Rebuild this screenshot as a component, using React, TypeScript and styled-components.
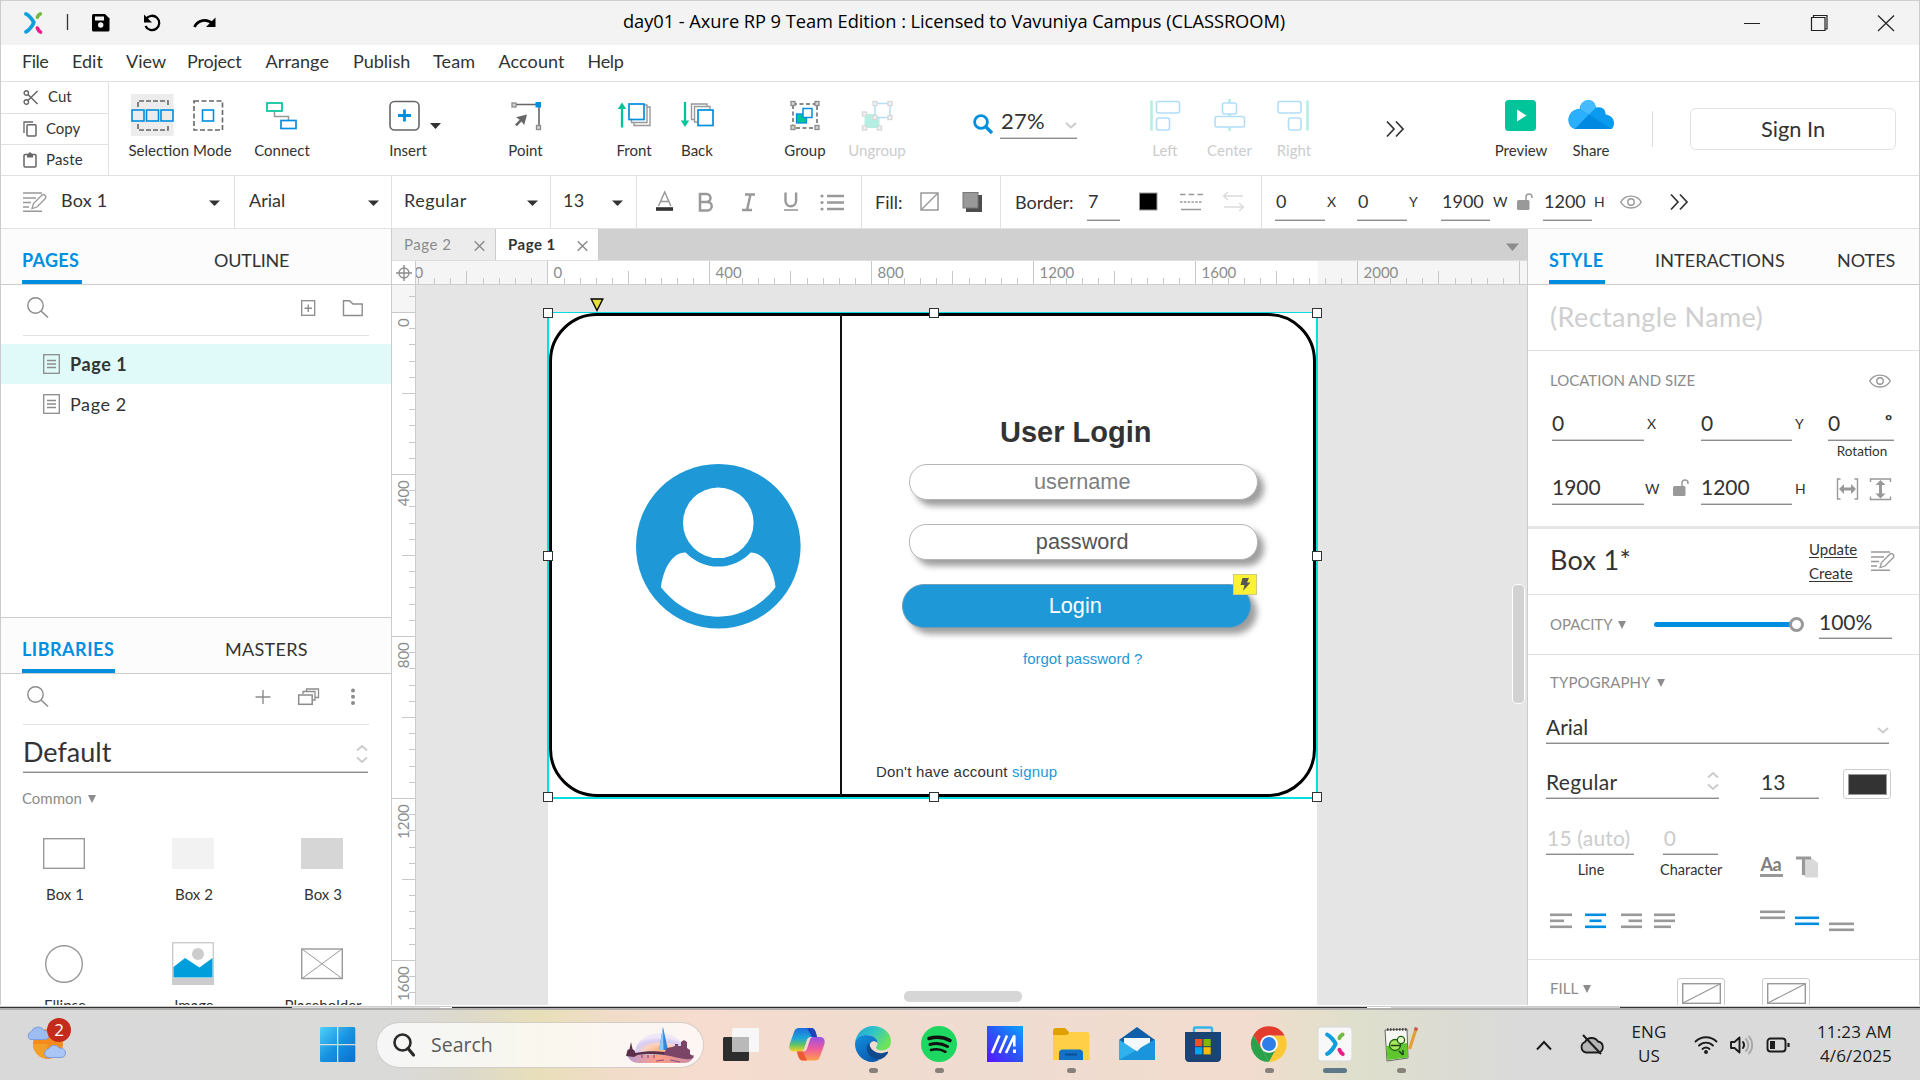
import React from 'react';
import styled, { createGlobalStyle } from 'styled-components';

const ui = 'Lato, "Noto Sans", sans-serif';
const sys = '"Open Sans", "Noto Sans", sans-serif';
const arial = '"Liberation Sans", Arial, sans-serif';
const INK = '#333333';
const GRAY = '#8c8c8c';
const ICON = '#999999';
const BLUE = '#008fe0';
const GREEN = '#00c49a';
const LINE = '#e2e2e2';

const GlobalStyle = createGlobalStyle`
  * { box-sizing: border-box; }
  body { margin: 0; width: 1920px; height: 1080px; overflow: hidden; background: #fff; font-family: ${ui}; color: ${INK}; }
  svg { display: block; flex: none; overflow: visible; }
`;

/* ---------- shared parts ---------- */

interface TxtProps { $s?: number; $w?: number; $ml?: number; $c?: string; $b?: boolean; $ls?: number; $align?: string; $mt?: number }
const Txt = styled.span<TxtProps>`
  display: block;
  flex: none;
  padding-bottom: 2px;
  white-space: nowrap;
  line-height: 1.2;
  font-size: ${p => p.$s ?? 18}px;
  width: ${p => (p.$w ? `${p.$w}px` : 'auto')};
  margin-left: ${p => p.$ml ?? 0}px;
  margin-top: ${p => p.$mt ?? 0}px;
  color: ${p => p.$c ?? INK};
  font-weight: ${p => (p.$b ? 700 : 400)};
  letter-spacing: ${p => p.$ls ?? 0}px;
  text-align: ${p => p.$align ?? 'left'};
`;

const Spacer = styled.div<{ $w: number }>`flex: none; width: ${p => p.$w}px;`;

const Line = styled.div<{ $h?: number; $mt?: number; $pl?: number; $align?: string }>`
  display: flex;
  align-items: ${p => p.$align ?? 'center'};
  height: ${p => (p.$h ? `${p.$h}px` : 'auto')};
  margin-top: ${p => p.$mt ?? 0}px;
  padding-left: ${p => p.$pl ?? 0}px;
`;

const Field = styled.div<{ $w: number; $h?: number; $s?: number; $c?: string; $pl?: number; $mb?: number; $ls?: number }>`
  flex: none;
  display: flex;
  align-items: center;
  justify-content: space-between;
  width: ${p => p.$w}px;
  height: ${p => p.$h ?? 36}px;
  padding-left: ${p => p.$pl ?? 1}px;
  margin-bottom: ${p => p.$mb ?? 0}px;
  border-bottom: 1px solid ${GRAY};
  box-shadow: 0 -1px 0 #cfcfcf inset;
  font-size: ${p => p.$s ?? 21}px;
  letter-spacing: ${p => p.$ls ?? 0}px;
  line-height: 1;
  color: ${p => p.$c ?? INK};
  white-space: nowrap;
`;

interface IcoProps { x?: number; y?: number; w: number; h: number; ml?: number; children: React.ReactNode }
const IcoSvg = styled.svg<{ $ml: number }>`margin-left: ${p => p.$ml}px;`;
const Ico = ({ x = 0, y = 0, w, h, ml = 0, children }: IcoProps) => (
  <IcoSvg $ml={ml} width={w} height={h} viewBox={`${x} ${y} ${w} ${h}`} fill="none">{children}</IcoSvg>
);

const Caret = ({ ml = 0 }: { ml?: number }) => (
  <Ico ml={ml} w={11} h={6}><path d="M0 1.500h11L5.500 7z" fill={INK} /></Ico>
);
const Triangle = ({ ml = 0 }: { ml?: number }) => (
  <Ico ml={ml} w={8} h={8}><path d="M0 0h8L4 8z" fill={GRAY} /></Ico>
);
const UpDown = () => (
  <Ico w={12} h={20}><path d="M1 6.500 6 2l5 4.500M1 13.500 6 18l5-4.500" stroke="#cccccc" strokeWidth="2" /></Ico>
);
const Down = () => (
  <Ico w={12} h={16}><path d="M1 10l5 4.500L11 10" stroke="#cccccc" strokeWidth="2" /></Ico>
);
const More = ({ ml = 0 }: { ml?: number }) => (
  <Ico ml={ml} w={18} h={16}><path d="M1 .5 8 8l-7 7.500M10 .5 17 8l-7 7.500" stroke={INK} strokeWidth="1.700" /></Ico>
);
const StylePen = ({ ml = 0 }: { ml?: number }) => (
  <Ico ml={ml} w={24} h={20}>
    <path d="M0 1h19M0 6h13M0 10.500h8M0 15h6M0 19.200h19" stroke={ICON} strokeWidth="1.500" />
    <path d="M9 16.500l1.500-5L18.500 3.500a2.300 2.300 0 0 1 3.600 3.200L14 15z" stroke={ICON} strokeWidth="1.300" fill="#fff" />
  </Ico>
);
const Eye = ({ ml = 0 }: { ml?: number }) => (
  <Ico ml={ml} w={22} h={14}>
    <path d="M.7 7C5-.9 17-.9 21.300 7 17 14.900 5 14.900.7 7z" stroke={ICON} strokeWidth="1.400" />
    <circle cx="11" cy="7" r="3.200" stroke={ICON} strokeWidth="1.400" />
  </Ico>
);
const Lock = ({ ml = 0 }: { ml?: number }) => (
  <Ico ml={ml} w={16} h={17}>
    <rect x="0" y="7" width="12.500" height="10" rx="1.500" fill={ICON} />
    <path d="M9 7V4a3 3 0 0 1 6 0v1" stroke={ICON} strokeWidth="1.500" />
  </Ico>
);
const Glass = ({ ml = 0 }: { ml?: number }) => (
  <Ico ml={ml} w={22} h={21}>
    <circle cx="8.500" cy="8.500" r="7.700" stroke={GRAY} strokeWidth="1.400" />
    <path d="M14 14l7 6.500" stroke={GRAY} strokeWidth="1.600" />
  </Ico>
);

/* ---------- window chrome ---------- */

const Window = styled.div`
  width: 1920px;
  height: 1080px;
  display: flex;
  flex-direction: column;
`;
const Frame = styled.div`
  flex: none;
  height: 1005px;
  display: flex;
  flex-direction: column;
  border-left: 1px solid #cccccc;
  border-right: 1px solid #cccccc;
  background: #fff;
`;
const TitleBar = styled.header`
  flex: none;
  display: flex;
  align-items: center;
  height: 45px;
  padding-left: 23px;
  border-top: 1px solid #cfcfcf;
  background: #f3f3f3;
`;
const Title = styled.div`
  flex: none;
  width: 668px;
  margin-left: 406px;
  margin-bottom: 5px;
  font: 18.300px ${sys};
  letter-spacing: -0.060px;
  line-height: 24px;
  color: #000;
  white-space: nowrap;
`;
const MenuBar = styled.nav`
  flex: none;
  display: flex;
  align-items: center;
  height: 37px;
  padding-left: 21px;
  border-bottom: 1px solid ${LINE};
`;

const menus: [string, number, number?][] = [
  ['File', 50, -0.5], ['Edit', 54], ['View', 61], ['Project', 78.5, -0.2], ['Arrange', 87.5, 0.1],
  ['Publish', 80, 0], ['Team', 65.5, 0.1], ['Account', 89, 0.1], ['Help', 40, -0.3],
];

/* ---------- main toolbar ---------- */

const ToolBar = styled.div`
  flex: none;
  display: flex;
  height: 94px;
  border-bottom: 1px solid ${LINE};
`;
const Clipboard = styled.div`
  flex: none;
  width: 108px;
  border-right: 1px solid ${LINE};
  display: flex;
  flex-direction: column;
`;
const ClipRow = styled.div<{ $h: number }>`
  display: flex;
  align-items: center;
  height: ${p => p.$h}px;
  padding-left: 22px;
  padding-bottom: 1px;
  & + & { border-top: 1px solid ${LINE}; }
`;
const ToolCell = styled.div<{ $w: number; $gap: number }>`
  flex: none;
  width: ${p => p.$w}px;
  margin-left: ${p => p.$gap}px;
  padding-top: 12px;
  display: flex;
  flex-direction: column;
  align-items: center;
`;
const ToolLabel = styled.span<{ $off?: boolean }>`
  margin-top: 5px;
  font-size: 15px;
  line-height: 18px;
  white-space: nowrap;
  color: ${p => (p.$off ? '#cccccc' : INK)};
`;
const ZoomBox = styled.div`
  flex: none;
  display: flex;
  align-items: center;
  width: 104px;
  height: 36px;
  margin: 21px 0 0 64px;
`;
const GlassHolder = styled.div`padding-top: 6px;`;
const MoreHolder = styled.div`flex: none; margin: 39px 0 0 62px;`;
const SignIn = styled.button`
  flex: none;
  width: 206px;
  height: 42px;
  margin: 26px 0 0 37px;
  padding: 0 0 1px;
  border: 1.500px solid ${LINE};
  border-radius: 6px;
  background: #fff;
  font: 21.800px ${ui};
  color: ${INK};
`;
const ToolDivider = styled.div`
  flex: none;
  width: 1px;
  height: 36px;
  margin: 29px 0 0 31px;
  background: #dedede;
`;

interface ToolProps { x: number; w: number; gap: number; label: string; off?: boolean; children: React.ReactNode }
const Tool = ({ x, w, gap, label, off, children }: ToolProps) => (
  <ToolCell $w={w} $gap={gap}>
    <Ico x={x} y={94} w={w} h={42}>{children}</Ico>
    <ToolLabel $off={off}>{label}</ToolLabel>
  </ToolCell>
);

const Node = ({ x, y, c = GRAY, f = '#d5d5d5' }: { x: number; y: number; c?: string; f?: string }) => (
  <rect x={x - 2} y={y - 2} width="4" height="4" fill={f} stroke={c} strokeWidth="1.300" />
);

const MainToolbar = () => (
  <ToolBar>
    <Clipboard>
      <ClipRow $h={31}>
        <Ico w={16} h={15}>
          <circle cx="3.300" cy="3" r="2.200" stroke="#666" strokeWidth="1.400" />
          <circle cx="3.300" cy="12" r="2.200" stroke="#666" strokeWidth="1.400" />
          <path d="M5 4.500l9.500 9.500M5 10.500L14.500 1" stroke="#666" strokeWidth="1.500" />
        </Ico>
        <Txt $s={15} $ml={9}>Cut</Txt>
      </ClipRow>
      <ClipRow $h={31}>
        <Ico w={14} h={16}>
          <path d="M1 12V1h9" stroke="#666" strokeWidth="1.300" />
          <rect x="4" y="3.700" width="9" height="11.300" rx="1" stroke="#666" strokeWidth="1.500" />
        </Ico>
        <Txt $s={15} $ml={9}>Copy</Txt>
      </ClipRow>
      <ClipRow $h={31}>
        <Ico w={14} h={16}>
          <rect x="1" y="2.500" width="12" height="12.500" rx="1" stroke="#666" strokeWidth="1.500" />
          <path d="M4 2h6v3.500H4z" fill="#666" />
          <circle cx="7" cy="1.800" r="1.600" fill="#666" />
        </Ico>
        <Txt $s={15} $ml={9} $ls={0.2}>Paste</Txt>
      </ClipRow>
    </Clipboard>

    <Tool x={128} w={104} gap={19} label="Selection Mode">
      <rect x="131" y="94" width="42.500" height="42" fill="#ececec" />
      <path d="M138 107v-6h30v6M138 124v6h30v-6" stroke="#666" strokeWidth="1.600" strokeDasharray="5 2" />
      {[132, 146.500, 161].map(x => <rect key={x} x={x} y="110" width="12" height="11" fill="#ececec" stroke={BLUE} strokeWidth="1.600" />)}
      <rect x="194" y="101" width="28.500" height="29" stroke="#666" strokeWidth="1.600" strokeDasharray="5 2.500" />
      <rect x="202.500" y="110" width="11" height="11" stroke={BLUE} strokeWidth="1.600" />
    </Tool>
    <Tool x={252} w={60} gap={20} label="Connect">
      <path d="M274.500 111v5.500h14v3.500" stroke={ICON} strokeWidth="1.500" />
      <rect x="267" y="103" width="15" height="8" stroke={GREEN} strokeWidth="1.700" />
      <rect x="281" y="120.500" width="15" height="8" stroke={BLUE} strokeWidth="1.700" />
    </Tool>
    <Tool x={375} w={66} gap={63} label="Insert">
      <rect x="390" y="101.500" width="29" height="28.500" rx="4.500" stroke="#666" strokeWidth="1.600" />
      <path d="M404.500 109.500v12M398 115.500h13" stroke={BLUE} strokeWidth="2.800" />
      <path d="M430 123h11l-5.500 6z" fill={INK} />
    </Tool>
    <Tool x={495} w={61} gap={54} label="Point">
      <path d="M514 104.500h25v22" stroke="#666" strokeWidth="1.600" />
      <Node x={514} y={105} />
      <Node x={538.500} y={127.500} />
      <rect x="535.500" y="102" width="5.500" height="5.500" fill={BLUE} />
      <path d="M527 114.500l-2.800 10.500-2.700-3.400-4.700 4.600-1.800-1.800 4.700-4.600-3.600-2.500z" fill="#666" />
    </Tool>
    <Tool x={604} w={60} gap={48} label="Front">
      <path d="M622 107v20.500" stroke={GREEN} strokeWidth="2.300" />
      <path d="M617.800 109l4.200-6.500 4.200 6.500z" fill={GREEN} />
      <path d="M646.500 107h3.500v18.500h-16v-3" stroke={ICON} strokeWidth="1.400" />
      <path d="M644 105h3v17.500h-15.500V119" stroke={ICON} strokeWidth="1.400" />
      <rect x="629" y="104" width="15" height="15.500" stroke={BLUE} strokeWidth="1.700" fill="#fff" />
    </Tool>
    <Tool x={667} w={60} gap={3} label="Back">
      <path d="M685 102v20" stroke={GREEN} strokeWidth="2.300" />
      <path d="M680.800 120.500l4.200 6.500 4.200-6.500z" fill={GREEN} />
      <path d="M695 119.500h-3.500V104H707v3" stroke={ICON} strokeWidth="1.400" />
      <path d="M697.500 122h-3v-15.500H710v3" stroke={ICON} strokeWidth="1.400" />
      <rect x="698" y="110" width="15" height="15.500" stroke={BLUE} strokeWidth="1.700" fill="#fff" />
    </Tool>
    <Tool x={775} w={60} gap={48} label="Group">
      <rect x="793" y="104" width="24" height="24" stroke="#666" strokeWidth="1.500" strokeDasharray="4 2.500" />
      <rect x="796.500" y="114" width="10" height="9" fill={GREEN} stroke={BLUE} strokeWidth="1.300" />
      <rect x="803" y="108.500" width="9" height="9" fill="#fff" stroke={BLUE} strokeWidth="1.500" />
      <Node x={793} y={103.500} /><Node x={817} y={103.500} /><Node x={793} y={127.500} /><Node x={817} y={127.500} />
    </Tool>
    <Tool x={845} w={64} gap={10} label="Ungroup" off>
      <rect x="864.500" y="114" width="15" height="14" fill="#b5efe3" />
      <rect x="875" y="103.500" width="15" height="14" fill="#fff" stroke="#b3def8" strokeWidth="1.500" />
      {[[864.500, 114], [864.500, 128], [879.500, 128], [875, 103.500], [890, 103.500], [890, 117.500], [875, 117.500]].map(([x, y]) => (
        <Node key={`${x}-${y}`} x={x} y={y} c="#d8d8d8" f="#f3f3f3" />
      ))}
    </Tool>
    <ZoomBox>
      <GlassHolder>
        <Ico w={20} h={20}>
          <circle cx="8" cy="8" r="6.400" stroke={BLUE} strokeWidth="2.800" />
          <path d="M12.500 12.500l6.500 6.500" stroke={BLUE} strokeWidth="3.400" />
        </Ico>
      </GlassHolder>
      <Spacer $w={7} />
      <Field $w={77} $h={36} $s={22} $ls={0.2}>27%<Down /></Field>
    </ZoomBox>
    <Tool x={1135} w={60} gap={58} label="Left" off>
      <path d="M1151.500 100.500v30" stroke="#b5efe3" strokeWidth="2.600" />
      <rect x="1156.500" y="101.500" width="23" height="11.500" rx="2" stroke="#b3def8" strokeWidth="1.600" />
      <rect x="1156.500" y="118" width="13" height="12" rx="2" stroke="#b3def8" strokeWidth="1.600" />
    </Tool>
    <Tool x={1199} w={61} gap={4} label="Center" off>
      <path d="M1229.500 99v32" stroke="#b5efe3" strokeWidth="2.600" />
      <rect x="1222.500" y="103" width="14" height="11" rx="2" fill="#fff" stroke="#b3def8" strokeWidth="1.600" />
      <rect x="1215" y="116.500" width="29.500" height="10.500" rx="2" fill="#fff" stroke="#b3def8" strokeWidth="1.600" />
    </Tool>
    <Tool x={1264} w={60} gap={4} label="Right" off>
      <path d="M1307.500 100.500v30" stroke="#b5efe3" strokeWidth="2.600" />
      <rect x="1278" y="101.500" width="23" height="11.500" rx="2" stroke="#b3def8" strokeWidth="1.600" />
      <rect x="1288.500" y="118" width="12.500" height="12" rx="2" stroke="#b3def8" strokeWidth="1.600" />
    </Tool>
    <MoreHolder><More /></MoreHolder>
    <Tool x={1491} w={60} gap={87} label="Preview">
      <rect x="1505" y="100" width="31" height="31" rx="3.500" fill={GREEN} />
      <path d="M1517 109.500v12l9.500-6z" fill="#fff" />
    </Tool>
    <Tool x={1561} w={60} gap={10} label="Share">
      <path d="M1575 129a9.500 9.500 0 0 1-6.500-9c0-6 4.500-11 11-11a9.500 9.500 0 0 1 8.500-9c4.500 0 7.500 3.500 8 7.500 6-1.500 10 2 9.500 7 5 .5 8.500 4 8.500 8.500 0 3-1 5-2.500 6z" fill="#0a9bf0" />
      <path d="M1575 129a9.500 9.500 0 0 1-6.500-9c0-6 4.500-11 11-11l9.500 5.500z" fill="#2bb0ff" />
      <path d="M1580 109a8.500 8.500 0 0 1 8-9c4.500 0 7.500 3.500 8 7.500l-7 7z" fill="#46bcff" />
      <path d="M1575 129l14-14.500 22.500 14.500z" fill="#0089e0" />
    </Tool>
    <ToolDivider />
    <SignIn>Sign In</SignIn>
  </ToolBar>
);

/* ---------- format bar ---------- */

const FormatRow = styled.div`
  flex: none;
  display: flex;
  height: 53px;
  border-bottom: 1px solid ${LINE};
`;
const Segment = styled.div<{ $w: number; $pl: number }>`
  flex: none;
  display: flex;
  align-items: center;
  width: ${p => p.$w}px;
  padding-left: ${p => p.$pl}px;
  padding-bottom: 1px;
  border-right: 1px solid ${LINE};
  &:last-child { border-right: 0; }
`;
const SmallField = styled.div<{ $w: number; $ml?: number }>`
  flex: none;
  width: ${p => p.$w}px;
  height: 34px;
  margin-left: ${p => p.$ml ?? 0}px;
  margin-top: 5px;
  padding: 0 0 6px 1px;
  display: flex;
  align-items: center;
  font-size: 18px;
  border-bottom: 1px solid ${GRAY};
  box-shadow: 0 -1px 0 #cfcfcf inset;
`;

const FormatBar = () => (
  <FormatRow>
    <Segment $w={234} $pl={22}>
      <StylePen />
      <Txt $ml={14} $w={148} $ls={0.2}>Box 1</Txt>
      <Caret />
    </Segment>
    <Segment $w={157} $pl={14}>
      <Txt $w={119}>Arial</Txt>
      <Caret />
    </Segment>
    <Segment $w={159} $pl={12}>
      <Txt $w={123} $ls={0.5}>Regular</Txt>
      <Caret />
    </Segment>
    <Segment $w={86} $pl={12}>
      <Txt $w={49} $ls={0.2}>13</Txt>
      <Caret />
    </Segment>
    <Segment $w={225} $pl={0}>
      <Ico x={637} y={189.5} w={224} h={26}>
        <path d="M658.500 206.500L664.700 192.500l6.200 14M660.700 202h8" stroke={ICON} strokeWidth="1.500" />
        <path d="M656 209.500h17" stroke={INK} strokeWidth="3.600" />
        <path d="M700 194.500h6.500a4 4 0 0 1 0 8H700zM700 202.500h7.500a4.200 4.200 0 0 1 0 8.400H700z" stroke={ICON} strokeWidth="2.500" />
        <path d="M745 195h10M742 210.500h10M750.500 195l-3.500 15.500" stroke={ICON} strokeWidth="2.400" />
        <path d="M785.500 193v8.500a5.300 5.300 0 0 0 10.600 0V193" stroke={ICON} strokeWidth="2.400" />
        <path d="M784 210.500h14" stroke={ICON} strokeWidth="1.600" />
        {[196.500, 203, 209.500].map(y => (
          <g key={y} stroke={ICON}>
            <circle cx="822" cy={y} r="1.600" fill={ICON} stroke="none" />
            <path d={`M827 ${y}h17`} strokeWidth="2.500" />
          </g>
        ))}
      </Ico>
    </Segment>
    <Segment $w={139} $pl={13}>
      <Txt $w={46} $mt={4}>Fill:</Txt>
      <Ico x={921} y={192} w={62} h={22}>
        <rect x="921" y="194" width="17" height="17" stroke={ICON} strokeWidth="1.500" />
        <path d="M921.500 210.500l16-16" stroke={ICON} strokeWidth="1.500" />
        <rect x="966" y="196" width="16" height="17" fill="#4d4d4d" />
        <rect x="963" y="193.500" width="15" height="15.500" fill={ICON} stroke="#777" />
      </Ico>
    </Segment>
    <Segment $w={261} $pl={14}>
      <Txt $w={72} $mt={4}>Border:</Txt>
      <SmallField $w={33}>7</SmallField>
      <Ico ml={18} x={1138} y={192} w={110} h={22}>
        <rect x="1139.500" y="194" width="17.500" height="17" fill="#000" stroke="#999" />
        <path d="M1180 195.500h23" stroke={ICON} strokeWidth="1.400" strokeDasharray="5.500 3.200" />
        <path d="M1180 203h22" stroke={ICON} strokeWidth="1.600" strokeDasharray="2.500 1.300" />
        <path d="M1181 210.500h20" stroke={ICON} strokeWidth="1.500" />
        <path d="M1243 197h-19m4-4l-4.500 4 4.500 4M1224 208h19m-4-4l4.500 4-4.500 4" stroke="#dcdcdc" strokeWidth="1.500" />
      </Ico>
    </Segment>
    <Segment $w={656} $pl={13}>
      <SmallField $w={50}>0</SmallField>
      <Txt $s={14} $w={30} $ml={2} $mt={3}>X</Txt>
      <SmallField $w={50}>0</SmallField>
      <Txt $s={14} $w={32} $ml={2} $mt={3}>Y</Txt>
      <SmallField $w={49}>1900</SmallField>
      <Txt $s={14} $w={24} $ml={3} $mt={3}>W</Txt>
      <Lock />
      <SmallField $w={49} $ml={10}>1200</SmallField>
      <Txt $s={14} $w={26} $ml={2} $mt={3}>H</Txt>
      <Eye />
      <More ml={28} />
    </Segment>
  </FormatRow>
);

/* ---------- side panels ---------- */

const Body = styled.div`
  flex: none;
  display: flex;
  height: 776px;
  overflow: hidden;
`;
const LeftPanel = styled.aside`
  flex: none;
  width: 391px;
  border-right: 1px solid #cccccc;
  overflow: hidden;
`;
const PanelHead = styled.div<{ $pl: number }>`
  display: flex;
  height: 56px;
  padding-left: ${p => p.$pl}px;
  background: #fcfcfc;
  border-bottom: 1px solid #cccccc;
`;
const PanelTab = styled.div<{ $w: number; $on?: boolean; $gap?: number; $ls?: number }>`
  flex: none;
  width: ${p => p.$w}px;
  margin-left: ${p => p.$gap ?? 0}px;
  padding-top: 20px;
  font-size: 18px;
  line-height: 22px;
  white-space: nowrap;
  letter-spacing: ${p => p.$ls ?? 0}px;
  color: ${p => (p.$on ? BLUE : INK)};
  font-weight: ${p => (p.$on ? 700 : 400)};
  border-bottom: ${p => (p.$on ? `4px solid ${BLUE}` : '0')};
`;
const PagesBox = styled.div`height: 389px; border-bottom: 1px solid #cccccc;`;
const SearchRow = styled.div`
  display: flex;
  align-items: center;
  height: 51px;
  margin: 0 22px;
  padding: 0 0 5px 4px;
  border-bottom: 1px solid ${LINE};
`;
const PageStack = styled.div`padding-top: 8px;`;
const PageRow = styled.div<{ $on?: boolean }>`
  display: flex;
  align-items: center;
  height: 40px;
  padding-left: 42px;
  background: ${p => (p.$on ? '#e0fafa' : 'transparent')};
`;
const PageIcon = () => (
  <Ico w={17} h={20}>
    <rect x=".7" y=".7" width="15.600" height="18.600" stroke={GRAY} strokeWidth="1.300" />
    <path d="M4 6.500h9M4 10h9M4 13.500h9" stroke={GRAY} strokeWidth="1.300" />
  </Ico>
);
const LibSelect = styled.div`
  display: flex;
  align-items: center;
  justify-content: space-between;
  height: 48px;
  margin: 0 23px 0 22px;
  padding: 10px 0 0 0;
  border-bottom: 1px solid ${GRAY};
  box-shadow: 0 -1px 0 #cfcfcf inset;
`;
const Shelf = styled.div<{ $mt: number }>`
  display: flex;
  margin: ${p => p.$mt}px 0 0 -2px;
`;
const Widget = styled.div`
  flex: none;
  width: 129px;
  display: flex;
  flex-direction: column;
  align-items: center;
`;
const WidgetName = styled.span<{ $mt: number }>`
  margin: ${p => p.$mt}px 0 0 3px;
  font-size: 15px;
  line-height: 18px;
`;

const Left = () => (
  <LeftPanel>
    <PagesBox>
      <PanelHead $pl={21}>
        <PanelTab $w={60} $on $ls={0.3}>PAGES</PanelTab>
        <PanelTab $w={80} $gap={132} $ls={-0.2}>OUTLINE</PanelTab>
      </PanelHead>
      <SearchRow>
        <Glass />
        <Ico ml={252} x={301} y={300} w={62} h={16}>
          <rect x="301.700" y="300.700" width="13" height="14.600" stroke={GRAY} strokeWidth="1.300" />
          <path d="M308.200 304.500v7.500M304.500 308.200h7.500" stroke={GRAY} strokeWidth="1.400" />
          <path d="M343.500 315.500v-14.800h6l3.500 3.300h9.200v11.500z" stroke={GRAY} strokeWidth="1.400" />
        </Ico>
      </SearchRow>
      <PageStack>
        <PageRow $on><PageIcon /><Txt $ml={10} $mt={3} $b $ls={0.6}>Page 1</Txt></PageRow>
        <PageRow><PageIcon /><Txt $ml={10} $mt={3} $ls={0.6}>Page 2</Txt></PageRow>
      </PageStack>
    </PagesBox>
    <PanelHead $pl={21}>
      <PanelTab $w={93} $on $ls={0.5}>LIBRARIES</PanelTab>
      <PanelTab $w={90} $gap={110} $ls={0.3}>MASTERS</PanelTab>
    </PanelHead>
    <SearchRow>
      <Glass />
      <Ico ml={206} x={255} y={688} w={101} h={17}>
        <path d="M263 690v14M255.500 697h15" stroke={GRAY} strokeWidth="1.400" />
        <path d="M303 694v-2.500h12V700h-2M306.500 691.500v-2.500h12v8.500h-3" stroke={GRAY} strokeWidth="1.300" />
        <rect x="298.700" y="695" width="13.500" height="9.300" stroke={GRAY} strokeWidth="1.500" />
        <circle cx="353" cy="690.500" r="2" fill={GRAY} /><circle cx="353" cy="696.700" r="2" fill={GRAY} /><circle cx="353" cy="703" r="2" fill={GRAY} />
      </Ico>
    </SearchRow>
    <LibSelect><Txt $s={27}>Default</Txt><UpDown /></LibSelect>
    <Line $mt={15} $h={22} $pl={21}><Txt $s={15} $c={GRAY} $w={66}>Common</Txt><Triangle /></Line>
    <Shelf $mt={28}>
      <Widget><Ico w={42} h={31}><rect x=".7" y=".7" width="40.600" height="29.600" stroke={ICON} strokeWidth="1.400" /></Ico><WidgetName $mt={16}>Box 1</WidgetName></Widget>
      <Widget><Ico w={42} h={31}><rect width="42" height="31" fill="#f2f2f2" /></Ico><WidgetName $mt={16}>Box 2</WidgetName></Widget>
      <Widget><Ico w={42} h={31}><rect width="42" height="31" fill="#d6d6d6" /></Ico><WidgetName $mt={16}>Box 3</WidgetName></Widget>
    </Shelf>
    <Shelf $mt={39}>
      <Widget>
        <Ico w={42} h={43}><circle cx="21" cy="22" r="18.300" stroke={ICON} strokeWidth="1.400" /></Ico>
        <WidgetName $mt={11}>Ellipse</WidgetName>
      </Widget>
      <Widget>
        <Ico w={42} h={43}>
          <rect x=".7" y=".7" width="40.600" height="41" stroke="#cccccc" strokeWidth="1.400" />
          <rect y="36" width="42" height="7" fill="#cccccc" />
          <circle cx="26" cy="12" r="6" fill="#cccccc" />
          <path d="M1.500 25L13 16l14.500 9.500L40.500 16v19.500h-39z" fill="#009fdc" />
        </Ico>
        <WidgetName $mt={11}>Image</WidgetName>
      </Widget>
      <Widget>
        <Ico w={42} h={43}>
          <rect x=".7" y="7" width="40.600" height="29.500" stroke={ICON} strokeWidth="1.400" />
          <path d="M1 7l40 29.500M41 7L1 36.500" stroke={ICON} />
        </Ico>
        <WidgetName $mt={11}>Placeholder</WidgetName>
      </Widget>
    </Shelf>
  </LeftPanel>
);

const RightPanel = styled.aside`
  flex: none;
  width: 392px;
  border-left: 1px solid #cccccc;
  overflow: hidden;
`;
const Section = styled.section<{ $h?: number; $thick?: boolean }>`
  display: flow-root;
  height: ${p => (p.$h ? `${p.$h}px` : 'auto')};
  border-bottom: ${p => (p.$thick ? '3px solid #e6e6e6' : `1px solid ${LINE}`)};
`;
const Heading = styled.span<{ $w: number; $ls?: number }>`
  flex: none;
  width: ${p => p.$w}px;
  padding-bottom: 2px;
  font-size: 15px;
  letter-spacing: ${p => p.$ls ?? 0}px;
  color: ${GRAY};
  white-space: nowrap;
`;
const Links = styled.div`
  flex: none;
  width: 62px;
  display: flex;
  flex-direction: column;
  font-size: 15px;
  line-height: 24px;
  text-decoration: underline;
  text-underline-offset: 2px;
`;
const Track = styled.div`flex: none; width: 137px; height: 5px; margin-left: 28px; border-radius: 3px 0 0 3px; background: ${BLUE};`;
const Knob = styled.div`flex: none; width: 15px; height: 15px; margin-left: -2px; border: 3px solid ${ICON}; border-radius: 50%; background: #fff;`;
const Swatch = styled.div<{ $ml: number }>`
  flex: none;
  width: 48px;
  height: 30px;
  margin-left: ${p => p.$ml}px;
  border: 1px solid #cccccc;
  border-radius: 3px;
  display: flex;
  align-items: center;
  justify-content: center;
`;
const SwatchColor = styled.div`width: 39px; height: 21px; border: 1.500px solid ${ICON}; background: ${INK};`;
const NoFill = () => (
  <Ico w={39} h={21}><rect x=".7" y=".7" width="37.600" height="19.600" stroke={ICON} strokeWidth="1.400" /><path d="M1 20L38 1" stroke={ICON} strokeWidth="1.300" /></Ico>
);
const Column = styled.div<{ $ml?: number }>`
  flex: none;
  display: flex;
  flex-direction: column;
  align-items: center;
  margin-left: ${p => p.$ml ?? 0}px;
`;
const CaseMark = styled.span`
  flex: none;
  margin: 35px 0 0 38px;
  width: 23px;
  height: 22px;
  font-size: 18px;
  line-height: 19px;
  font-weight: 700;
  letter-spacing: -0.500px;
  color: #808080;
  border-bottom: 3px solid ${ICON};
`;
const ShadowWrap = styled.div`padding: 36px 0 0 12px;`;
const TextShadowIcon = () => (
  <ShadowWrap>
    <Ico w={24} h={22}>
      <path d="M9 20V5l6-4 8 6v14.500H12z" fill="#d9d9d9" />
      <path d="M1 2h15M8.500 2v17" stroke={ICON} strokeWidth="3.200" />
    </Ico>
  </ShadowWrap>
);

const bars = (rows: number[][], color = ICON) => rows.map(([x, y, w]) => (
  <rect key={`${x}-${y}`} x={x} y={y} width={w} height="2.600" fill={color} />
));

const Right = () => (
  <RightPanel>
    <PanelHead $pl={21}>
      <PanelTab $w={56} $on $ls={0.5}>STYLE</PanelTab>
      <PanelTab $w={135} $gap={50} $ls={0.1}>INTERACTIONS</PanelTab>
      <PanelTab $w={60} $gap={47}>NOTES</PanelTab>
    </PanelHead>
    <Section $h={66}><Line $h={65} $pl={22}><Txt $s={27} $mt={2} $c="#cfcfcf" $ls={0.4}>(Rectangle Name)</Txt></Line></Section>
    <Section $h={178} $thick>
      <Line $h={24} $mt={18} $pl={22}><Heading $w={319}>LOCATION AND SIZE</Heading><Eye /></Line>
      <Line $h={36} $mt={12} $pl={24}>
        <Field $w={92} $pl={0}>0</Field><Txt $s={14} $w={54} $ml={3} $mt={5}>X</Txt>
        <Field $w={91} $pl={0}>0</Field><Txt $s={14} $w={33} $ml={3} $mt={5}>Y</Txt>
        <Field $w={66} $pl={0}>0<Txt $b $s={18} $w={9}>º</Txt></Field>
      </Line>
      <Line $h={16} $mt={3} $pl={301}><Txt $s={13.5} $w={66} $align="center">Rotation</Txt></Line>
      <Line $h={36} $mt={9} $pl={24}>
        <Field $w={92} $pl={0}>1900</Field><Txt $s={14} $w={28} $ml={1} $mt={6}>W</Txt>
        <Lock /><Spacer $w={12} />
        <Field $w={91} $pl={0}>1200</Field><Txt $s={14} $w={42} $ml={3} $mt={6}>H</Txt>
        <Ico x={1837} y={478} w={55} h={20}>
          <path d="M1840.500 480h-3v20h3M1854.500 480h3v20h-3M1870.500 483v-3h20v3M1870.500 497.500v3h20v-3" stroke={ICON} strokeWidth="1.400" />
          <path d="M1839 490l5-5v3.500h7V485l5 5-5 5v-3.500h-7v3.500zM1880.500 481l5 5h-3.500v8.500h3.500l-5 5-5-5h3.500V486h-3.500z" fill={ICON} />
        </Ico>
      </Line>
    </Section>
    <Section $h={66}>
      <Line $h={64} $pl={22}>
        <Txt $s={27} $w={259} $ls={0.3}>Box 1*</Txt>
        <Links><span>Update</span><span>Create</span></Links>
        <StylePen />
      </Line>
    </Section>
    <Section $h={60}>
      <Line $h={59} $pl={22}>
        <Heading $w={68}>OPACITY</Heading><Triangle />
        <Track /><Knob /><Spacer $w={15} />
        <Field $w={73} $h={35} $mb={6} $pl={0}>100%</Field>
      </Line>
    </Section>
    <Section $h={305}>
      <Line $h={24} $mt={16} $pl={22}><Heading $w={107} $ls={0.1}>TYPOGRAPHY</Heading><Triangle /></Line>
      <Line $h={35} $mt={14} $pl={18}><Field $w={343} $h={35} $pl={0}>Arial<Down /></Field></Line>
      <Line $h={35} $mt={20} $pl={18} $align="flex-end">
        <Field $w={173} $h={35} $pl={0} $ls={0.3}>Regular<UpDown /></Field><Spacer $w={41} />
        <Field $w={59} $h={35}>13</Field>
        <Swatch $ml={24}><SwatchColor /></Swatch>
      </Line>
      <Line $h={60} $mt={21} $pl={18} $align="flex-start">
        <Column><Field $w={88} $h={35} $c="#cccccc" $ls={0.2}>15 (auto)</Field><Txt $s={14.5} $mt={6} $ml={2}>Line</Txt></Column>
        <Column $ml={24}><Field $w={55} $h={35} $c="#cccccc">0</Field><Txt $s={14.5} $mt={6} $ml={2}>Character</Txt></Column>
        <CaseMark>Aa</CaseMark>
        <TextShadowIcon />
      </Line>
      <Line $h={26} $mt={28} $pl={22}>
        <Ico x={1550} y={909.5} w={305} h={24}>
          {bars([[1550, 914, 22], [1550, 920, 14], [1550, 926, 22]])}
          {bars([[1585, 914, 21], [1589.5, 920, 12], [1585, 926, 21]], BLUE)}
          {bars([[1621, 914, 21], [1628.5, 920, 13.5], [1621, 926, 21]])}
          {bars([[1654, 914, 21], [1654, 920, 21], [1654, 926, 17]])}
          {bars([[1760, 911, 25], [1760, 917, 25]])}
          {bars([[1795, 917, 24], [1795, 923, 24]], BLUE)}
          {bars([[1829, 923, 25], [1829, 929, 25]])}
        </Ico>
      </Line>
    </Section>
    <Line $mt={18} $pl={22} $align="flex-start">
      <Line $h={22}><Heading $w={33}>FILL</Heading><Triangle /></Line>
      <Swatch $ml={86}><NoFill /></Swatch>
      <Swatch $ml={37}><NoFill /></Swatch>
    </Line>
  </RightPanel>
);

/* ---------- design canvas ---------- */

const Centre = styled.main`
  flex: none;
  width: 1135px;
  display: flex;
  flex-direction: column;
`;
const Tabs = styled.div`
  flex: none;
  display: flex;
  height: 32px;
  background: #d0d0d0;
  border-bottom: 1px solid #dedede;
`;
const DocTab = styled.div<{ $on?: boolean; $w: number }>`
  display: flex;
  align-items: center;
  width: ${p => p.$w}px;
  padding-left: 12px;
  background: ${p => (p.$on ? '#ffffff' : '#ececec')};
  border-right: 1px solid #cccccc;
`;
const CloseX = () => (
  <Ico w={11} h={8}><path d="M.7.2l9.600 9.600M10.300.2L.7 9.800" stroke={GRAY} strokeWidth="1.500" /></Ico>
);
const TabMenu = styled.div`margin: 14px 8px 0 auto;`;
const RulerRow = styled.div`flex: none; display: flex; height: 24px; border-bottom: 1px solid #cccccc;`;
const Corner = styled.div`
  flex: none; width: 24px; border-right: 1px solid #cccccc;
  display: flex; align-items: center; justify-content: center;
`;
const RulerX = styled.div`flex: none; width: 1111px; overflow: hidden; background: #fff;`;
const RulerY = styled.div`flex: none; width: 24px; border-right: 1px solid #cccccc; overflow: hidden;`;
const CanvasRow = styled.div`flex: none; display: flex; height: 720px;`;
const Canvas = styled.div`
  position: relative;
  flex: none;
  width: 1111px;
  overflow: hidden;
  background: #e5e5e5;
`;
const Sheet = styled.div`
  position: absolute; left: 132px; top: 28px; width: 769px; height: 692px; background: #fff;
`;
const Card = styled.div`
  position: absolute; left: 131px; top: 27px; width: 771px; height: 487px;
  border: 1px solid #00e0e0;
  border-width: 1px 2px 2px 2px;
  display: flex;
`;
const CardShape = styled.div`
  flex: 1;
  border: 3px solid #000;
  border-radius: 48px;
  background: #fff;
`;
const Divider = styled.div`position: absolute; left: 423.500px; top: 29px; width: 2px; height: 482px; background: #111;`;
const Handle = styled.div<{ $x: number; $y: number }>`
  position: absolute;
  left: ${p => p.$x - 421}px;
  top: ${p => p.$y - 290}px;
  width: 10px; height: 10px;
  border: 1.500px solid #333;
  background: #fff;
`;
const Over = styled.div<{ $x: number; $y: number }>`
  position: absolute;
  left: ${p => p.$x - 416}px;
  top: ${p => p.$y - 285}px;
`;
const DesignText = styled(Over)<{ $s: number; $c?: string; $bold?: boolean; $ls?: number }>`
  font: ${p => (p.$bold ? 700 : 400)} ${p => p.$s}px ${arial};
  line-height: 1.200;
  letter-spacing: ${p => p.$ls ?? 0}px;
  color: ${p => p.$c ?? INK};
  white-space: nowrap;
`;
const Pill = styled(Over)<{ $h: number; $fill?: string; $c: string; $r: number }>`
  display: flex;
  align-items: center;
  justify-content: center;
  width: 348.500px;
  height: ${p => p.$h}px;
  padding-right: 2px;
  border: 1px solid ${p => (p.$fill ? '#6f9dba' : '#b5b5b5')};
  border-radius: ${p => p.$r}px;
  background: ${p => p.$fill ?? '#fff'};
  box-shadow: 6px 6px 6px rgba(0, 0, 0, 0.380);
  font: 21.700px ${arial};
  color: ${p => p.$c};
`;
const Signup = styled.span`color: #1e98d7;`;
const VThumb = styled.div`
  position: absolute; left: 1096px; top: 299px; width: 13px; height: 120px;
  border: 1px solid #fff; border-radius: 5px; background: #d2d2d2;
`;
const HThumb = styled.div`
  position: absolute; left: 488px; top: 706px; width: 118px; height: 11px;
  border-radius: 5px; background: #d6d6d6;
`;

const ticks = (origin: number, from: number, to: number) => {
  const out: { p: number; i: number }[] = [];
  for (let i = Math.ceil((from - origin) / 16.2); origin + i * 16.2 < to; i++) out.push({ p: Math.round(origin + i * 16.2) + 0.5, i });
  return out;
};

const HorizontalRuler = () => (
  <RulerX>
    <Ico x={416} y={261} w={1111} h={23}>
      <rect x="416" y="261" width="132" height="23" fill="#f5f5f5" />
      <rect x="1318" y="261" width="209" height="23" fill="#f5f5f5" />
      {ticks(547.4, 417, 1527).map(({ p, i }) => (
        <path key={i} d={`M${p} ${i % 10 === 0 ? 261 : i % 5 === 0 ? 271 : 278}V284`} stroke="#c8c8c8" />
      ))}
      {[-400, 0, 400, 800, 1200, 1600, 2000].map(v => (
        <text key={v} x={548 + v * 0.405 + 5.5} y="278" fontSize="15" fill={GRAY} fontFamily="Lato, sans-serif">{v}</text>
      ))}
    </Ico>
  </RulerX>
);

const VerticalRuler = () => (
  <RulerY>
    <Ico x={392} y={285} w={23} h={720}>
      <rect x="392" y="285" width="23" height="28" fill="#f5f5f5" />
      {ticks(311.9, 285, 1005).map(({ p, i }) => (
        <path key={i} d={`M${i % 10 === 0 ? 392 : i % 5 === 0 ? 402 : 409} ${p}H416`} stroke="#c8c8c8" />
      ))}
      {[0, 400, 800, 1200, 1600].map(v => (
        <text key={v} transform={`translate(409 ${312.7 + v * 0.405 + 5.5}) rotate(-90)`} textAnchor="end" fontSize="15" fill={GRAY} fontFamily="Lato, sans-serif">{v}</text>
      ))}
    </Ico>
  </RulerY>
);

const Workspace = () => (
  <Centre>
    <Tabs>
      <DocTab $w={104}><Txt $s={15} $c={GRAY} $w={70} $ls={0.5}>Page 2</Txt><CloseX /></DocTab>
      <DocTab $w={103} $on><Txt $s={15} $b $w={69} $ls={0.5}>Page 1</Txt><CloseX /></DocTab>
      <TabMenu><Ico w={13} h={8}><path d="M0 .5h13L6.500 8z" fill={GRAY} /></Ico></TabMenu>
    </Tabs>
    <RulerRow>
      <Corner>
        <Ico w={16} h={16}>
          <circle cx="8" cy="8" r="5" stroke={GRAY} strokeWidth="1.300" />
          <path d="M8 0v16M0 8h16" stroke={GRAY} strokeWidth="1.400" />
        </Ico>
      </Corner>
      <HorizontalRuler />
    </RulerRow>
    <CanvasRow>
      <VerticalRuler />
      <Canvas>
        <Sheet />
        <Card><CardShape /></Card>
        <Divider />
        <Over $x={636} $y={464}>
          <Ico x={636} y={464} w={165} h={165}>
            <circle cx="718.300" cy="546.300" r="82.300" fill="#1e98d7" />
            <circle cx="718.300" cy="522.800" r="35.300" fill="#fff" />
            <path d="M661 587.300C663 570 672 552 685.700 552.500A44.500 44.500 0 0 0 750.700 552.500C764 552 774 570 775.500 587.300C762 605 742 616.700 718 616.700S675 605 661 587.300z" fill="#fff" />
          </Ico>
        </Over>
        <DesignText $x={1000} $y={415} $s={29} $bold>User Login</DesignText>
        <Pill $x={909} $y={463.500} $h={36} $c="#7f7f7f" $r={20}>username</Pill>
        <Pill $x={909} $y={524} $h={35.500} $c="#555555" $r={17}>password</Pill>
        <Pill $x={902} $y={584} $h={44} $fill="#1e98d7" $c="#ffffff" $r={22}>Login</Pill>
        <DesignText $x={1023} $y={650} $s={15} $c="#1e98d7">forgot password ?</DesignText>
        <DesignText $x={876} $y={763} $s={15} $ls={0.2}>Don't have account <Signup>signup</Signup></DesignText>
        <Over $x={1233} $y={574}>
          <Ico w={24} h={21}>
            <rect x=".5" y=".5" width="23" height="20" fill="#fbf236" stroke="#cfcb7a" />
            <path d="M9.500 4h6.500l-2 4.500h3.500L10 17l1.500-6H7.500z" fill="#555" />
          </Ico>
        </Over>
        <Over $x={590} $y={298}>
          <Ico w={14} h={14}><path d="M1.200 1h11.600L7 12.500z" fill="#e6e03a" stroke="#000" strokeWidth="1.400" /></Ico>
        </Over>
        {[[548, 312.500], [933.500, 312.500], [1316.500, 312.500], [548, 555.500], [1316.500, 555.500], [548, 797], [933.500, 797], [1316.500, 797]].map(([x, y]) => (
          <Handle key={`${x}-${y}`} $x={x} $y={y} />
        ))}
        <VThumb />
        <HThumb />
      </Canvas>
    </CanvasRow>
  </Centre>
);

/* ---------- taskbar ---------- */

const Seam = styled.div`
  flex: none;
  height: 5px;
  border-top: 1px solid #fff;
  border-bottom: 2px solid #b2b0ae;
  background: linear-gradient(90deg, #333 0 292px, #ddd 292px 440px, #fff 440px 452px, #2b2b2b 452px 1367px, #fff 1367px 1391px, #d0d0d0 1391px 1620px, #333 1620px) 0 1px / 100% 1px no-repeat #cccccc;
`;
const TaskBar = styled.footer`
  flex: none;
  height: 70px;
  display: flex;
  align-items: center;
  background: linear-gradient(90deg, #d9d9d9 0, #dadad9 400px, #dcd9cc 460px, #e8dfb9 540px, #f0dcc8 610px, #f6dccf 700px, #f1dbcf 820px, #efdcd0 1000px, #f2dccf 1250px, #e8decb 1300px, #dfdfcc 1350px, #dcdcd2 1430px, #dadada 1520px);
  font-family: ${sys};
`;
const SearchPill = styled.div`
  flex: none;
  display: flex;
  align-items: center;
  width: 328px;
  height: 46px;
  margin: -1px 4px 0 20px;
  padding: 0 7px 0 16px;
  border: 1px solid rgba(120, 110, 100, 0.300);
  border-radius: 23px;
  background: rgba(255, 255, 255, 0.750);
`;
const SearchText = styled.span`
  flex: 1;
  margin-left: 16px;
  font-size: 19.500px;
  line-height: 28px;
  color: #5a5a5a;
`;
const Slot = styled.div`
  flex: none;
  width: 66px;
  height: 70px;
  padding-top: 16px;
  display: flex;
  flex-direction: column;
  align-items: center;
`;
const RunMark = styled.i<{ $wide?: boolean }>`
  margin-top: 6px;
  width: ${p => (p.$wide ? 24 : 9)}px;
  height: 5px;
  border-radius: 3px;
  background: ${p => (p.$wide ? '#5f7888' : '#87807b')};
`;
const SysText = styled.div<{ $w: number; $ml: number; $align: string }>`
  flex: none;
  width: ${p => p.$w}px;
  margin-left: ${p => p.$ml}px;
  margin-top: -3px;
  font-size: 17px;
  line-height: 24px;
  letter-spacing: 0.150px;
  text-align: ${p => p.$align};
  color: #1c1c1c;
  white-space: nowrap;
`;
const Badge = styled.span`
  position: absolute; left: 19px; top: 8px; width: 24px; height: 24px;
  border-radius: 50%; background: #c42b1c; color: #fff;
  font-size: 17px; line-height: 24px; text-align: center;
`;
const Weather = styled.div`position: relative; flex: none; width: 44px; height: 70px; margin-left: 28px; padding-top: 14px;`;

const AxureMark = () => (
  <>
    <path d="M2 2C5 3 9 8.500 9.800 10.500 9 13 5 18.500 2 19.800" stroke="#109fdc" strokeWidth="3.800" strokeLinejoin="round" strokeLinecap="round" />
    <path d="M16.300 1.800c-1.300.6-2.600 2-3 3.500" stroke="#74b943" strokeWidth="3.600" strokeLinecap="round" />
    <path d="M13.300 16c.7 1.700 1.800 3.200 3.200 4" stroke="#ec1c8b" strokeWidth="3.600" strokeLinecap="round" />
  </>
);

const Slots = () => (
  <>
    <Slot><Ico w={36} h={36}>
      <rect x="0" y="11" width="26" height="24" rx="1.500" fill="#2d2d2d" />
      <rect x="9" y="2" width="27" height="24" rx="1.500" fill="#f7f7f7" />
      <rect x="9" y="11" width="17" height="15" fill="#b9b9b9" />
    </Ico></Slot>
    <Slot><Ico w={36} h={36}>
      <defs>
        <linearGradient id="cpA" x1="0" y1="0" x2="0" y2="1"><stop stopColor="#1a6fe0" /><stop offset=".45" stopColor="#22a6d8" /><stop offset=".7" stopColor="#5cc26a" /><stop offset="1" stopColor="#f6d321" /></linearGradient>
        <linearGradient id="cpB" x1="0" y1="0" x2="0" y2="1"><stop stopColor="#9a50e6" /><stop offset=".5" stopColor="#ee5a9c" /><stop offset="1" stopColor="#ffa04a" /></linearGradient>
      </defs>
      <path d="M10 2h12c3 0 4 2 5 5l1 4h-6c-3 0-4 2-5 6l-2 6c-.7 2-2 2.500-4 2.500H5C1 25.500-.5 22 .7 18L5 6c1-3 2.500-4 5-4z" fill="url(#cpA)" />
      <path d="M18 2h4c3 0 4 2 5 5l1 4h-5z" fill="#1b45b8" />
      <path d="M26 34.500H14c-3 0-4-2-5-5l-1-4h6c3 0 4-2 5-6l2-6c.7-2 2-2.500 4-2.500h6c4 0 5.500 3.500 4.300 7.500L31 30.500c-1 3-2.500 4-5 4z" fill="url(#cpB)" />
      <path d="M18 34.500h-4c-3 0-4-2-5-5l-1-4h6z" fill="#ee5a34" />
    </Ico></Slot>
    <Slot><Ico w={36} h={36}>
      <defs>
        <linearGradient id="edA" x1="0" y1="0" x2="1" y2=".5"><stop stopColor="#1f9fd8" /><stop offset=".5" stopColor="#2fc5c8" /><stop offset="1" stopColor="#6ee35a" /></linearGradient>
        <linearGradient id="edB" x1="0" y1="0" x2=".6" y2="1"><stop stopColor="#1390e0" /><stop offset="1" stopColor="#0a5cae" /></linearGradient>
      </defs>
      <path d="M0 17C1 7 9 0 18 0c10 0 18 7 18 15 0 6-4 9.500-9 9.500-4 0-6-1.500-6-3 0-1 1.500-1.500 1.500-4.500C22.500 12 18 9 12 9 6 9 1.500 12 0 17z" fill="url(#edA)" />
      <path d="M0 18c0-5 5-9 11-9 7 0 11.500 3.500 11.500 8-2-2-5-2.500-7 0-4 5-1 15 9 16.500-2 1.500-4 2.500-7 2.500C8 36 0 28 0 18z" fill="url(#edB)" />
      <path d="M14 17c-5 6-1 16 11 16.500 4-1.500 6.500-4 8-6.500.5-1-.5-1.500-1.500-1-7 3-16 0-17.500-9z" fill="#114a8b" />
    </Ico><RunMark /></Slot>
    <Slot><Ico w={36} h={36}>
      <circle cx="18" cy="18" r="18" fill="#1ed760" />
      <path d="M8 12.500c7-2 14.500-1.500 21 2" stroke="#111" strokeWidth="3.600" strokeLinecap="round" />
      <path d="M9 18.500c6-1.600 12-1 17.500 2" stroke="#111" strokeWidth="3" strokeLinecap="round" />
      <path d="M10 24c5-1.300 10-.8 14.500 1.800" stroke="#111" strokeWidth="2.500" strokeLinecap="round" />
    </Ico><RunMark /></Slot>
    <Slot><Ico w={36} h={36}>
      <defs><linearGradient id="maA" x1="0" y1="1" x2="1" y2="0"><stop stopColor="#5a14ff" /><stop offset=".5" stopColor="#2b55f5" /><stop offset="1" stopColor="#08a5ff" /></linearGradient></defs>
      <rect width="36" height="36" fill="url(#maA)" />
      <path d="M5 27L12.500 9.500M12.500 27L20 9.500" stroke="#fff" strokeWidth="2.600" />
      <path d="M19 27L27.300 9.500V20.500" stroke="#fff" strokeWidth="2.600" />
      <rect x="26" y="23.500" width="3" height="3.500" fill="#fff" />
    </Ico></Slot>
    <Slot><Ico w={36} h={36}>
      <path d="M0 5c0-2 1-3 3-3h9l4 4v6H0z" fill="#e0a100" />
      <path d="M0 9h14l3-3h17c1.500 0 2.500 1 2.500 2.500V34H0z" fill="#ffcf48" />
      <path d="M6 34v-7c0-2 1.500-3.500 3.500-3.500h17c2 0 3.500 1.500 3.500 3.500v7z" fill="#1173c7" />
      <path d="M12 28.500h12" stroke="#0a4f92" strokeWidth="2" />
    </Ico><RunMark /></Slot>
    <Slot><Ico w={36} h={36}>
      <path d="M0 14L18 1l18 13v8H0z" fill="#0f5ea8" />
      <path d="M5 12h26v12H5z" fill="#eef6fc" />
      <path d="M0 13.500l18 12 18-12V34H0z" fill="#2fb1ee" />
      <path d="M36 34V13.500L0 34z" fill="#1a95dc" />
      <path d="M5 12h26L18 25.500z" fill="#f2f8fd" />
    </Ico></Slot>
    <Slot><Ico w={36} h={36}>
      <path d="M9 7V3c0-1 .5-1.500 1.500-1.500h15c1 0 1.500.5 1.500 1.500v4" stroke="#35b4ea" strokeWidth="2.400" />
      <path d="M0 6h36v26c0 2-1.500 4-4 4H4c-2.500 0-4-2-4-4z" fill="#1b4373" />
      <rect x="10" y="13" width="7.200" height="7.200" fill="#f25022" /><rect x="18.500" y="13" width="7.200" height="7.200" fill="#7fba00" />
      <rect x="10" y="21.200" width="7.200" height="7.200" fill="#00a4ef" /><rect x="18.500" y="21.200" width="7.200" height="7.200" fill="#ffb900" />
    </Ico></Slot>
    <Slot><Ico w={36} h={36}>
      <path d="M2.400 9L10.600 22.500 18 36A18 18 0 0 1 2.400 9z" fill="#2aa24c" />
      <path d="M10.500 22.500L18 36 25.600 22.500z" fill="#2aa24c" />
      <path d="M25.500 22L18 36A18 18 0 0 0 33.600 9.500H18z" fill="#fcc934" />
      <path d="M2.400 9A18 18 0 0 1 33.600 9.500H18L10.500 22.500z" fill="#e33b2e" />
      <circle cx="18" cy="18" r="8.800" fill="#fff" /><circle cx="18" cy="18" r="7" fill="#2f7de9" />
    </Ico><RunMark /></Slot>
    <Slot><Ico w={36} h={36}>
      <rect x="1" y="1" width="34" height="34" rx="3" fill="#f8f8f8" stroke="#d9d9d9" />
      <g transform="translate(8 6.500) scale(1.080)"><AxureMark /></g>
    </Ico><RunMark $wide /></Slot>
    <Slot><Ico w={36} h={36}>
      <path d="M2 4l22-1 1 29-21 3z" fill="#f6f6f2" stroke="#666" />
      <path d="M3 20l21-3 1 14.500L4.500 34z" fill="#5fc62e" />
      <path d="M4 3.500h20" stroke="#444" strokeWidth="2.500" strokeDasharray="1.500 1.500" />
      <circle cx="12" cy="19" r="5.500" fill="#a8e65a" stroke="#1f5f14" strokeWidth="1.300" />
      <circle cx="18" cy="14" r="3.600" fill="#e6fac8" stroke="#1f5f14" strokeWidth="1.300" />
      <path d="M8 19.500h10M16 25l4 4M20 24v5" stroke="#1f3f14" strokeWidth="1.500" />
      <path d="M33 3l-6.500 20" stroke="#e5a03a" strokeWidth="3.200" /><path d="M33.500 1.500l-1 3" stroke="#c9574a" strokeWidth="3.400" />
    </Ico><RunMark /></Slot>
  </>
);

const Task = () => (
  <TaskBar>
    <Weather>
      <Ico w={42} h={46}>
        <circle cx="20" cy="20" r="15" fill="#f58a1f" />
        <path d="M5 20a15 15 0 0 0 12 14.500L20 20z" fill="#f3a02a" />
        <path d="M2 15.500a4.500 4.500 0 0 1 1.500-8A7 7 0 0 1 16 6.500c3 0 5 2 5 4.500s-1.500 4.500-4 4.500z" fill="#9dbcf2" stroke="#7d9fe0" />
        <path d="M20 33.500a4.300 4.300 0 0 1 .5-8.500 6 6 0 0 1 10.500-1c4 0 6.500 2 6.500 5s-2 4.500-4.500 4.500z" fill="#a9c6f7" stroke="#7d9fe0" />
      </Ico>
      <Badge>2</Badge>
    </Weather>
    <Ico ml={248} w={36} h={36}>
      <defs><linearGradient id="win" x1="0" y1="0" x2="1" y2="1"><stop stopColor="#4fd0fb" /><stop offset=".5" stopColor="#1793e0" /><stop offset="1" stopColor="#0a6fd0" /></linearGradient></defs>
      <path d="M1.500 0H17v17H0V1.500A1.500 1.500 0 0 1 1.500 0zM18.300 0h15.500A1.500 1.500 0 0 1 35.300 1.500V17h-17zM0 18.300h17V35H1.500A1.500 1.500 0 0 1 0 33.500zM18.300 18.300h17V33.500a1.500 1.500 0 0 1-1.500 1.500H18.300z" fill="url(#win)" />
    </Ico>
    <SearchPill>
      <Ico w={22} h={24}>
        <circle cx="9.500" cy="9.500" r="8" stroke="#2a2a2a" strokeWidth="2.600" />
        <path d="M15 15.500l5.500 6.500" stroke="#2a2a2a" strokeWidth="3.200" strokeLinecap="round" />
      </Ico>
      <SearchText>Search</SearchText>
      <Ico w={70} h={37}>
        <defs>
          <radialGradient id="glow" cx=".5" cy=".85" r=".65"><stop stopColor="#ffb27a" /><stop offset=".45" stopColor="#fbd3c0" /><stop offset=".7" stopColor="#d9ccf4" /><stop offset="1" stopColor="#efe8f8" /></radialGradient>
          <linearGradient id="water" x1="0" y1="0" x2="1" y2="0"><stop stopColor="#b79ad6" /><stop offset=".45" stopColor="#ff9f86" /><stop offset="1" stopColor="#c78aa8" /></linearGradient>
        </defs>
        <path d="M9 27a25 20 0 0 1 50 0z" fill="url(#glow)" />
        <path d="M1 29h67c-1 5-5 8-10 8H13C7 37 3 34 1 29z" fill="url(#water)" />
        <path d="M37 1l5 23h-9z" fill="#2f86dd" /><path d="M37 1l.5 23H33z" fill="#8ccaf7" />
        <path d="M0 30l1.500-6 2-1L5 16l1.500 7 2 1.500 1 2.500c10-2 18-2 30-1v3c-10-1-20-1-28 0L8 31z" fill="#5b2f4c" />
        <path d="M38 27l3-5 5-1 3-1v-2h3v2h3v-4l3-2 3 2v6l3 2v4l4 3-3 2c-8 1-18-3-27-4z" fill="#7a4566" />
        <path d="M16 29v3M22 29v3M28 29v3M30 35l8-1M44 34l10 2" stroke="#8a4f86" strokeWidth="1.200" />
      </Ico>
    </SearchPill>
    <Slots />
    <Ico ml={102} w={16} h={9}><path d="M1 8.500L8 1l7 7.500" stroke="#1c1c1c" strokeWidth="2" /></Ico>
    <Ico ml={27} w={26} h={20}>
      <path d="M7 17.500a5.500 5.500 0 0 1-1-10.500A7.500 7.500 0 0 1 19 6.500a5.600 5.600 0 0 1 .5 11z" fill="#b5b5b5" stroke="#1c1c1c" strokeWidth="1.800" />
      <path d="M4 0l18 19" stroke="#1c1c1c" strokeWidth="2" />
    </Ico>
    <SysText $w={60} $ml={14} $align="center">ENG<br />US</SysText>
    <Ico ml={15} x={0} y={0} w={96} h={20}>
      <g stroke="#1c1c1c" strokeWidth="1.900" strokeLinecap="round">
        <path d="M1.500 6.500a15 15 0 0 1 21 0M5 10.500a10 10 0 0 1 14 0M8.500 14a5.500 5.500 0 0 1 7 0" />
        <circle cx="12" cy="17" r="1" fill="#1c1c1c" />
        <path d="M37 7v6h3.500l5 4.500v-15l-5 4.500z" strokeLinejoin="round" />
        <path d="M49 7a5 5 0 0 1 0 6" />
        <path d="M52 4a9 9 0 0 1 0 12M55 1.500a13 13 0 0 1 0 17" stroke="#a8a8a8" />
      </g>
      <rect x="73.500" y="3.500" width="18" height="13" rx="3" stroke="#1c1c1c" strokeWidth="1.900" />
      <rect x="76" y="6" width="5" height="8" fill="#1c1c1c" /><path d="M94.500 8v4" stroke="#1c1c1c" strokeWidth="2.200" />
    </Ico>
    <SysText $w={101} $ml={1} $align="right">11:23 AM<br />4/6/2025</SysText>
  </TaskBar>
);

export default function App() {
  return (
    <Window>
      <GlobalStyle />
      <Frame>
        <TitleBar>
          <Ico w={20} h={22}><AxureMark /></Ico>
          <Ico ml={23} x={67} y={15} w={150} h={18}>
            <path d="M67.500 15v16" stroke="#333" strokeWidth="1.300" />
            <path d="M93.500 15h11.500l4.500 4.500V31a1.500 1.500 0 0 1-1.500 1.500H93.500A1.500 1.500 0 0 1 92 31V16.500A1.500 1.500 0 0 1 93.500 15z" fill="#000" />
            <rect x="95" y="17.500" width="9" height="4" fill="#f3f3f3" /><circle cx="100.700" cy="26" r="2.700" fill="#f3f3f3" />
            <path d="M146 20a7.200 7.200 0 1 1-.5 7" stroke="#000" strokeWidth="2.300" /><path d="M144 15.500v8h8z" fill="#000" />
            <path d="M194.500 28c3-7 12-9 18-3.500" stroke="#000" strokeWidth="2.800" /><path d="M215.500 18.500V28h-9.500z" fill="#000" />
          </Ico>
          <Title>day01 - Axure RP 9 Team Edition : Licensed to Vavuniya Campus (CLASSROOM)</Title>
          <Ico ml={453} x={1744} y={15} w={151} h={17}>
            <path d="M1744 23.500h16M1811.500 17.500h13.500v13h-13.500zM1813.500 17.500v-2h13.500v13.500h-2" stroke="#222" strokeWidth="1.200" />
            <path d="M1878 15.500l16 15.500M1894 15.500l-16 15.500" stroke="#222" strokeWidth="1.200" />
          </Ico>
        </TitleBar>
        <MenuBar>{menus.map(([m, w, ls]) => <Txt key={m} $w={w} $ls={ls}>{m}</Txt>)}</MenuBar>
        <MainToolbar />
        <FormatBar />
        <Body>
          <Left />
          <Workspace />
          <Right />
        </Body>
      </Frame>
      <Seam />
      <Task />
    </Window>
  );
}
